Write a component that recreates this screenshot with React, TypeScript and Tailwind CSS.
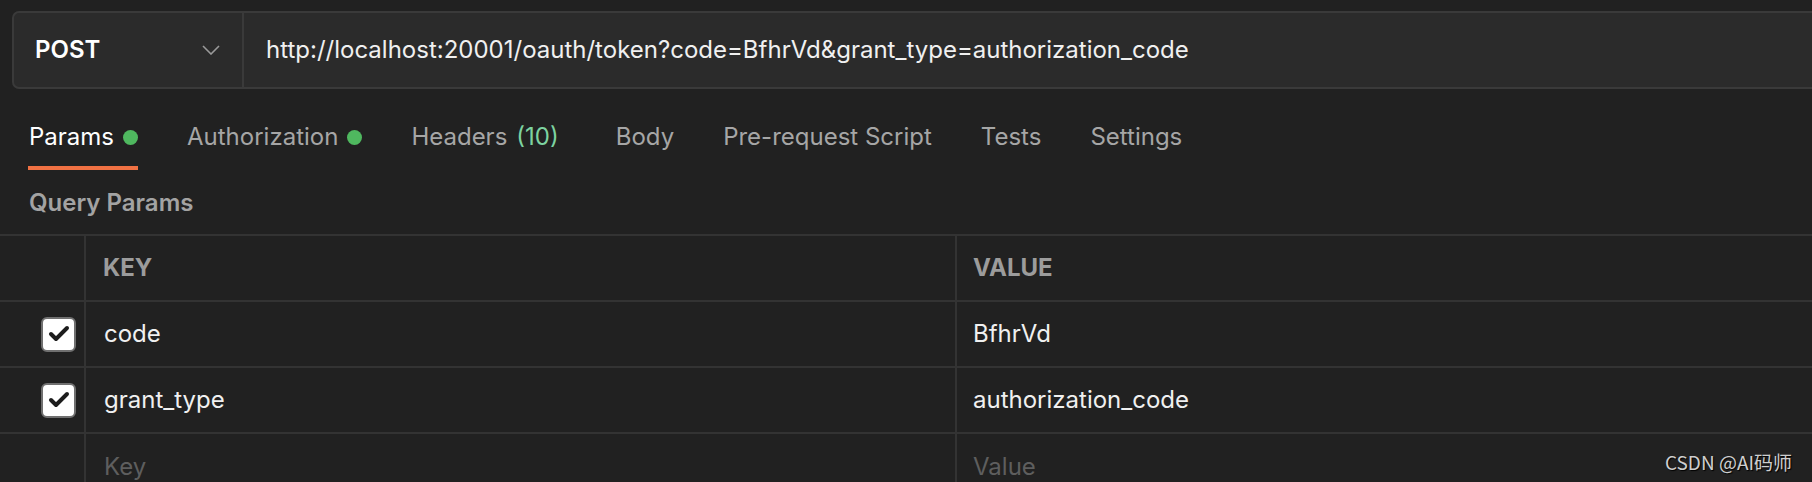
import { Check } from 'lucide-react'

const tabs = [
  { label: 'Params', active: true, dot: true },
  { label: 'Authorization', dot: true },
  { label: 'Headers', count: '(10)' },
  { label: 'Body' },
  { label: 'Pre-request Script' },
  { label: 'Tests' },
  { label: 'Settings' },
]

const rows = [
  { key: 'code', value: 'BfhrVd' },
  { key: 'grant_type', value: 'authorization_code' },
]

function Checkbox() {
  return (
    <div className="w-[35px] h-[35px] rounded-[6px] border-2 border-[#707070] bg-white flex items-center justify-center">
      <Check className="w-[24px] h-[24px] text-[#1c1c1c]" strokeWidth={4} />
    </div>
  )
}

function App() {
  return (
    <div className="relative w-[1812px] h-[482px] overflow-hidden bg-[#212121] font-['Inter','Liberation_Sans',sans-serif] text-[24px]">
      {/* url bar */}
      <div className="ml-[12px] mt-[11px] mr-[-20px] h-[78px] flex border-2 border-[#3a3a3a] rounded-l-[7px] bg-[#2b2b2b]">
        <div className="w-[230px] flex items-center justify-between pl-[21px] pr-[22px] border-r-2 border-[#3a3a3a]">
          <span className="font-semibold text-white">POST</span>
          <svg width="18" height="10" viewBox="0 0 18 10" fill="none">
            <polyline points="1,1 9,9 17,1" stroke="#9a9a9a" strokeWidth="1.6" />
          </svg>
        </div>
        <div className="flex items-center pl-[22px] text-[#f0f0f0]">
          http://localhost:20001/oauth/token?code=BfhrVd&amp;grant_type=authorization_code
        </div>
      </div>

      {/* tabs */}
      <div className="mt-[34px] ml-[28px] flex gap-[48px]">
        {tabs.map((t) => (
          <div
            key={t.label}
            className={`flex items-center h-[47px] pb-[15px] border-b-4 ${t.active ? 'border-[#f07143] text-white' : 'border-transparent text-[#a6a6a6]'} ${t.count ? 'mr-[8px]' : ''}`}
          >
            <span className="leading-[28px] pl-[1px]">{t.label}</span>
            {t.count && <span className="ml-[9px] text-[#7dd3a0]">{t.count}</span>}
            {t.dot && <span className="ml-[9px] w-[15px] h-[15px] rounded-full bg-[#4fb85f]" />}
          </div>
        ))}
      </div>

      <div className="mt-[19px] ml-[29px] leading-[28px] font-semibold text-[#a3a3a3]">Query Params</div>

      {/* table */}
      <div className="mt-[17px] border-t-2 border-[#333333]">
        <div className="flex h-[66px] border-b-2 border-[#333333]">
          <div className="w-[86px] border-r-2 border-[#333333]" />
          <div className="w-[871px] border-r-2 border-[#333333] flex items-center pl-[17px] font-bold text-[#9c9c9c]">KEY</div>
          <div className="flex-1 flex items-center pl-[16px] font-bold text-[#9c9c9c]">VALUE</div>
        </div>
        {rows.map((r) => (
          <div key={r.key} className="flex h-[66px] border-b-2 border-[#333333]">
            <div className="w-[86px] border-r-2 border-[#333333] flex items-center justify-end pr-[8px]">
              <Checkbox />
            </div>
            <div className="w-[871px] border-r-2 border-[#333333] flex items-center pl-[18px] text-[#f0f0f0]">{r.key}</div>
            <div className="flex-1 flex items-center pl-[16px] text-[#f0f0f0]">{r.value}</div>
          </div>
        ))}
        <div className="flex h-[66px]">
          <div className="w-[86px] border-r-2 border-[#333333]" />
          <div className="w-[871px] border-r-2 border-[#333333] flex items-center pl-[18px] text-[#5e5e5e]">Key</div>
          <div className="flex-1 flex items-center pl-[16px] text-[#5e5e5e]">Value</div>
        </div>
      </div>

      <div className="absolute right-[20px] bottom-[6px] text-[19px] text-[#cfcfcf] font-['Noto_Sans_CJK_SC',sans-serif] [text-shadow:1px_1px_1px_#000]">
        CSDN @AI码师
      </div>
    </div>
  )
}

export default App
